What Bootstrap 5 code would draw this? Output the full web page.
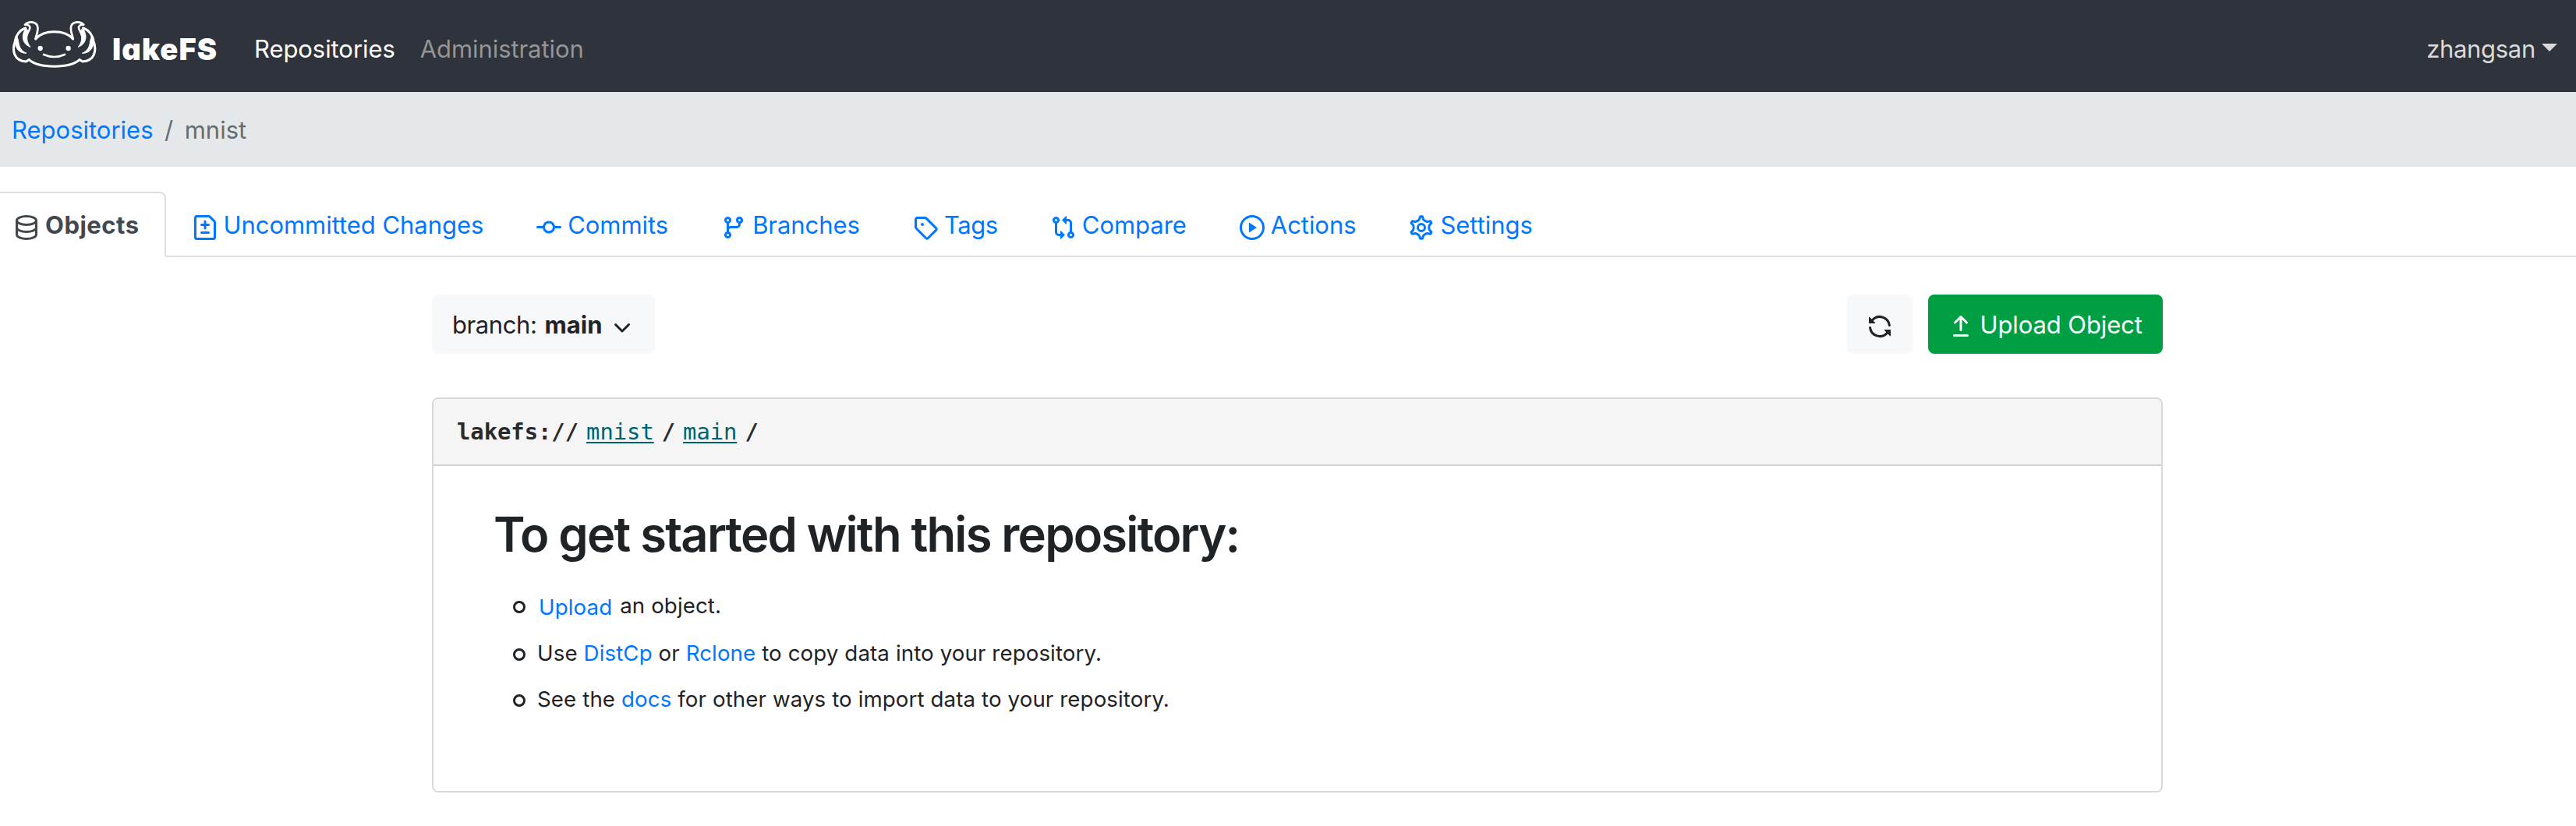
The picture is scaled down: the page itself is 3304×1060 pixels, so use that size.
<!DOCTYPE html>
<html lang="en">
<head>
<meta charset="utf-8">
<meta name="viewport" content="width=device-width, initial-scale=1">
<title>lakeFS - mnist</title>
<link href="https://cdn.jsdelivr.net/npm/bootstrap@5.3.0/dist/css/bootstrap.min.css" rel="stylesheet">
<style>
body{font-family:Inter,"Liberation Sans",sans-serif;font-size:31px;line-height:48px;color:#1f2326;background:#fff;overflow:hidden}
a{color:#0077ff;text-decoration:none}
.ico{width:32px;height:32px;flex:none;fill:currentColor;fill-rule:evenodd;margin-top:6px}
.ico.outline{fill:none;stroke:currentColor;stroke-width:1.5}
.topbar{height:118px;padding:8px 24px 0 15px;background:#2f333b;border-bottom:1px solid #2b2a33}
.brand-face{width:109px;height:62px;margin:-12px 20px 0 0}
.brand-name{font-size:38px;font-weight:900;font-feature-settings:"cv11";letter-spacing:1.1px;width:137px;color:#fff}
.topnav{margin-left:45px;gap:32px}
.topnav a{color:#939598;letter-spacing:-.07px}
.topnav a.active{color:#fff}
.user-menu{color:#dadada;letter-spacing:-.3px}
.user-menu::after{content:"";border:10px solid transparent;border-top-color:#dadada;border-bottom:0;margin:-4px 0 0 8px}
.crumbs{height:96px;background:#e4e8eb;padding-left:15px;padding-top:1px;gap:14.5px;color:#656d73}
.nav-tabs.repo-tabs{margin-top:32px;margin-left:-16px;border-bottom:2px solid #d9dfe3;--bs-nav-tabs-border-radius:8px;flex-wrap:nowrap}
.repo-tabs .nav-link{display:flex;align-items:center;gap:8px;height:84px;padding:2px 32px 0;border:2px solid transparent;margin-bottom:-2px;color:#0077ff;letter-spacing:-.05px}
.repo-tabs .nav-link.active{font-weight:700;letter-spacing:.5px;color:#43484e;border-color:#d9dfe3 #d9dfe3 #fff}
.tight,.repo-tabs .nav-link.tight{letter-spacing:-.4px}
.page{width:2220px;margin-left:554px;padding-top:48px}
.btn.tool{height:76px;border:0;border-radius:8px;font-size:31px;line-height:48px;padding:1px 26px 0;background:#f7f8fa;color:#1f2326;display:flex;align-items:center}
.btn.tool .ico{margin-top:5px}
.btn.branch{width:286px}
.btn.branch strong{margin-left:10px}
.btn.branch .ico{margin-left:auto}
.btn.upload{background:#009e43;color:#fff;gap:8.5px;letter-spacing:-.1px;width:301px}
.uri-card{margin-top:56px;height:507px;border:2px solid #d9d9d9;border-radius:8px}
.uri-head{height:86px;padding:0 30px;background:#f5f5f5;border-bottom:2px solid #d2d2d2;gap:10px;font:700 28.8px/42px "DejaVu Sans Mono",monospace;color:#2a2a2a;border-radius:6px 6px 0 0}
.uri-head a{font-weight:400;color:#00626c;text-decoration:underline;text-decoration-thickness:2px;text-underline-offset:3px}
.started{padding:50px 77px 0}
.started h1{font-size:61.5px;line-height:76px;font-weight:600;letter-spacing:-1.8px;margin:0 0 32px}
.started li{display:flex;font-size:27.7px;line-height:42px;letter-spacing:.1px;margin-bottom:17px}
.started li:first-child{margin-bottom:19px}
.started li::before{content:"";width:16px;height:16px;border:3px solid #1f2326;border-radius:50%;margin:15px 15px 0 25px}
.upload-link{display:inline-block;line-height:38px;margin:0 2px 0 2px;vertical-align:-2px}
</style>
</head>
<body>
<nav class="topbar d-flex align-items-center">
  <a href="#" class="d-flex align-items-center">
    <svg class="brand-face" viewBox="45 78 327 186" fill="none" stroke="#fff" stroke-width="9" stroke-linecap="round" stroke-linejoin="round">
      <path d="M137 150C168 113 250 113 281 150M112 230C150 264 268 264 306 230"/>
      <path d="M168 210Q209 228 249 210" stroke-width="8"/>
      <circle cx="155" cy="186" r="9.500" fill="#fff" stroke="none"/><circle cx="263" cy="186" r="9.500" fill="#fff" stroke="none"/>
      <g id="gills">
        <path d="M137 150C139 132 147 126 145 105C143 84 113 78 96 95C111 94 119 101 113 114C109 122 106 126 104 133" stroke-width="8"/>
        <path d="M98 108C75 116 61 137 58 158C45 195 54 235 100 237L112 230" />
        <path d="M100 110C83 128 80 167 117 181C106 166 98 150 110 122Z" fill="#fff" stroke-width="3"/>
        <path d="M57 154C57 180 69 206 102 205C83 197 73 182 71 158L66 140Z" fill="#fff" stroke-width="3"/>
      </g>
      <use href="#gills" transform="matrix(-1 0 0 1 418 0)"/>
    </svg>
    <span class="brand-name">lakeFS</span>
  </a>
  <div class="topnav d-flex"><a href="#" class="active">Repositories</a><a href="#">Administration</a></div>
  <a href="#" class="user-menu d-flex align-items-center ms-auto">zhangsan</a>
</nav>
<div class="crumbs d-flex align-items-center"><a href="#">Repositories</a><span>/</span><span>mnist</span></div>

<ul class="nav nav-tabs repo-tabs">
  <li class="nav-item"><a class="nav-link active" href="#"><svg class="ico outline" viewBox="0 0 16 16"><ellipse cx="8" cy="3.500" rx="6.250" ry="2.750"/><path d="M1.750 3.500v9c0 1.500 2.800 2.750 6.250 2.750s6.250-1.250 6.250-2.750v-9M1.750 8c0 1.500 2.800 2.750 6.250 2.750S14.250 9.500 14.250 8"/></svg>Objects</a></li>
  <li class="nav-item"><a class="nav-link" href="#"><svg class="ico" viewBox="0 0 16 16"><path d="M1 1.75C1 .784 1.784 0 2.75 0h7.586c.464 0 .909.184 1.237.513l2.914 2.914c.329.328.513.773.513 1.237v9.586A1.75 1.75 0 0 1 13.250 16H2.750A1.750 1.750 0 0 1 1 14.250Zm1.750-.25a.25.25 0 0 0-.25.25v12.500c0 .138.112.25.25.25h10.500a.25.25 0 0 0 .25-.25V4.664a.25.25 0 0 0-.073-.177l-2.914-2.914a.25.25 0 0 0-.177-.073ZM8 3.250a.75.75 0 0 1 .75.75v1.500h1.500a.75.75 0 0 1 0 1.500h-1.500v1.500a.75.75 0 0 1-1.500 0V7h-1.500a.75.75 0 0 1 0-1.500h1.500V4A.75.75 0 0 1 8 3.250Zm-3 8a.75.75 0 0 1 .75-.75h4.500a.75.75 0 0 1 0 1.500h-4.500a.75.75 0 0 1-.75-.75Z"/></svg>Uncommitted Changes</a></li>
  <li class="nav-item"><a class="nav-link" href="#"><svg class="ico" viewBox="0 0 16 16"><path d="M10.500 7.750a2.500 2.500 0 11-5 0 2.500 2.500 0 015 0zm1.430.75a4.002 4.002 0 01-7.860 0H.75a.75.75 0 110-1.500h3.320a4.001 4.001 0 017.860 0h3.320a.75.75 0 110 1.500h-3.320z"/></svg>Commits</a></li>
  <li class="nav-item"><a class="nav-link" href="#"><svg class="ico" viewBox="0 0 16 16"><path d="M11.750 2.500a.75.75 0 100 1.500.75.75 0 000-1.500zm-2.250.75a2.250 2.250 0 113 2.122V6A2.500 2.500 0 0110 8.500H6a1 1 0 00-1 1v1.128a2.251 2.251 0 11-1.500 0V5.372a2.250 2.250 0 111.500 0v1.836A2.492 2.492 0 016 7h4a1 1 0 001-1v-.628A2.250 2.250 0 019.500 3.250zM4.250 12a.75.75 0 100 1.500.75.75 0 000-1.500zM3.500 3.250a.75.75 0 111.500 0 .75.75 0 01-1.500 0z"/></svg>Branches</a></li>
  <li class="nav-item"><a class="nav-link tight" href="#"><svg class="ico" viewBox="0 0 16 16"><path d="M2.500 7.775V2.750a.25.25 0 01.25-.25h5.025a.25.25 0 01.177.073l6.250 6.250a.25.25 0 010 .354l-5.025 5.025a.25.25 0 01-.354 0l-6.250-6.250a.25.25 0 01-.073-.177zm-1.500 0V2.750C1 1.784 1.784 1 2.750 1h5.025c.464 0 .91.184 1.238.513l6.250 6.250a1.750 1.750 0 010 2.474l-5.026 5.026a1.750 1.750 0 01-2.474 0l-6.250-6.250A1.750 1.750 0 011 7.775zM6 5a1 1 0 100 2 1 1 0 000-2z"/></svg>Tags</a></li>
  <li class="nav-item"><a class="nav-link" href="#"><svg class="ico" viewBox="0 0 16 16"><g id="cmp"><path d="M9.573.677L7.177 3.073a.25.25 0 000 .354l2.396 2.396A.25.25 0 0010 5.646V4h1a1 1 0 011 1v5.628a2.251 2.251 0 101.500 0V5A2.500 2.500 0 0011 2.500h-1V.854a.25.25 0 00-.427-.177zM12 12.750a.75.75 0 111.500 0 .75.75 0 01-1.500 0z"/></g><use href="#cmp" transform="rotate(180 8 8)"/></svg>Compare</a></li>
  <li class="nav-item"><a class="nav-link" href="#"><svg class="ico" viewBox="0 0 16 16"><circle cx="8" cy="8" r="7.250" fill="none" stroke="currentColor" stroke-width="1.5"/><path d="M6 5.200v5.600c0 .3.200.4.400.25l4.200-2.800a.3.300 0 0 0 0-.5L6.400 4.950C6.200 4.800 6 4.900 6 5.200z"/></svg>Actions</a></li>
  <li class="nav-item"><a class="nav-link" href="#"><svg class="ico outline" viewBox="0 0 16 16"><circle cx="8" cy="8" r="2.250"/><path transform="translate(8 8) scale(1.1) translate(-8 -8)" stroke-width="1.360" d="M7.429 1.525a6.593 6.593 0 011.142 0c.036.003.108.036.137.146l.289 1.105c.147.56.55.967.997 1.189.174.086.341.183.501.29.417.278.97.423 1.530.27l1.102-.303c.11-.03.175.016.195.046.219.31.41.641.573.989.014.031.022.11-.059.19l-.815.806c-.411.406-.562.957-.53 1.456a4.588 4.588 0 010 .582c-.032.499.119 1.050.53 1.456l.815.806c.08.08.073.159.059.19a6.494 6.494 0 01-.573.99c-.02.029-.086.074-.195.045l-1.103-.303c-.559-.153-1.112-.008-1.529.27-.16.107-.327.204-.5.29-.449.222-.851.628-.998 1.189l-.289 1.105c-.029.11-.101.143-.137.146a6.613 6.613 0 01-1.142 0c-.036-.003-.108-.037-.137-.146l-.289-1.105c-.147-.56-.55-.967-.997-1.189a4.502 4.502 0 01-.501-.29c-.417-.278-.97-.423-1.530-.27l-1.102.303c-.11.03-.175-.016-.195-.046a6.492 6.492 0 01-.573-.989c-.014-.031-.022-.11.059-.19l.815-.806c.411-.406.562-.957.53-1.456a4.587 4.587 0 010-.582c.032-.499-.119-1.050-.53-1.456l-.815-.806c-.08-.08-.073-.159-.059-.19a6.440 6.440 0 01.573-.99c.02-.029.086-.075.195-.045l1.103.303c.559.153 1.112.008 1.529-.27.16-.107.327-.204.5-.29.449-.222.851-.628.998-1.189l.289-1.105c.029-.11.101-.143.137-.146z"/></svg>Settings</a></li>
</ul>

<main class="page">
  <div class="d-flex justify-content-between">
    <button class="btn tool branch"><span class="tight">branch:</span><strong>main</strong><svg class="ico" viewBox="0 0 16 16"><path d="M12.780 6.220a.75.75 0 010 1.060l-4.250 4.250a.75.75 0 01-1.060 0L3.220 7.280a.75.75 0 011.060-1.060L8 9.940l3.720-3.720a.75.75 0 011.060 0z"/></svg></button>
    <div class="d-flex" style="gap:20px">
      <button class="btn tool" aria-label="Refresh"><svg class="ico" viewBox="0 0 16 16"><path d="M8 2.500a5.487 5.487 0 00-4.131 1.869l1.204 1.204A.25.25 0 014.896 6H1.250A.25.25 0 011 5.750V2.104a.25.25 0 01.427-.177l1.380 1.380A7.001 7.001 0 0114.950 7.160a.75.75 0 11-1.490.178A5.501 5.501 0 008 2.500zM1.705 8.005a.75.75 0 01.834.656 5.501 5.501 0 009.592 2.970l-1.204-1.204a.25.25 0 01.177-.427h3.646a.25.25 0 01.25.25v3.646a.25.25 0 01-.427.177l-1.380-1.380A7.001 7.001 0 011.050 8.840a.75.75 0 01.656-.834z"/></svg></button>
      <button class="btn tool upload"><svg class="ico" viewBox="0 0 16 16"><path d="M8.530 1.220a.75.75 0 00-1.060 0L3.720 4.970a.75.75 0 001.060 1.060l2.470-2.470v6.690a.75.75 0 001.500 0V3.560l2.470 2.470a.75.75 0 101.060-1.060L8.530 1.220zM3.750 13a.75.75 0 000 1.500h8.500a.75.75 0 000-1.500h-8.500z"/></svg><span class="text-nowrap">Upload Object</span></button>
    </div>
  </div>
  <section class="card uri-card">
    <div class="uri-head d-flex align-items-center"><span>lakefs://</span><a href="#">mnist</a><span>/</span><a href="#">main</a><span>/</span></div>
    <div class="started">
      <h1>To get started with this repository:</h1>
      <ul class="list-unstyled m-0">
        <li><div><a href="#" class="upload-link">Upload</a> an object.</div></li>
        <li><div>Use <a href="#">DistCp</a> or <a href="#">Rclone</a> to copy data into your repository.</div></li>
        <li><div>See the <a href="#">docs</a> for other ways to import data to your repository.</div></li>
      </ul>
    </div>
  </section>
</main>
<script src="https://cdn.jsdelivr.net/npm/bootstrap@5.3.0/dist/js/bootstrap.bundle.min.js"></script>
</body>
</html>
